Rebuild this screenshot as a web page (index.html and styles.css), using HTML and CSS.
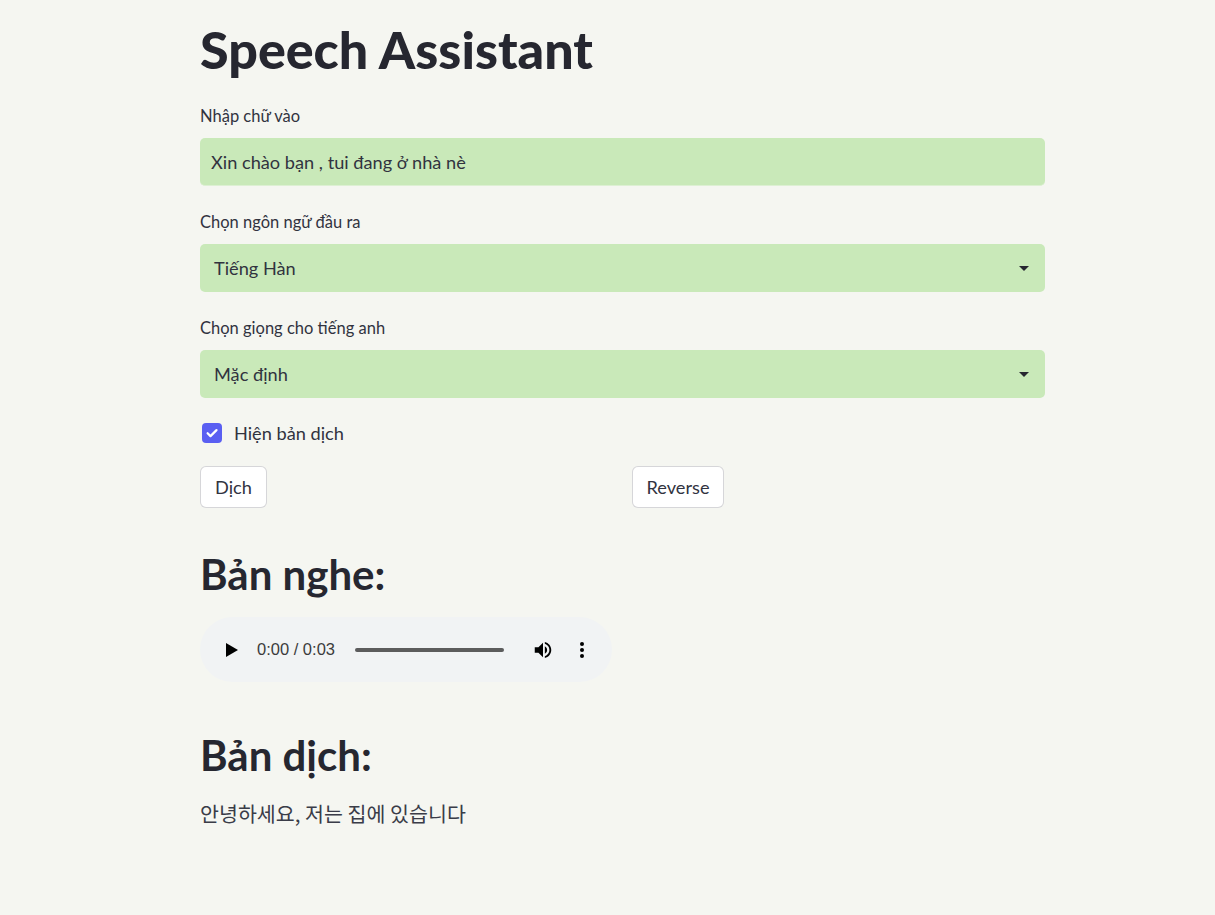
FILE: index.html
```html
<!DOCTYPE html>
<html lang="vi">
<head>
<meta charset="utf-8">
<title>Speech Assistant</title>
<link rel="stylesheet" href="styles.css">
</head>
<body>
<main class="app">
  <h1 class="title">Speech Assistant</h1>

  <div class="widget">
    <label class="label">Nhập chữ vào</label>
    <div class="field field-input">Xin chào bạn , tui đang ở nhà nè</div>
  </div>

  <div class="widget">
    <label class="label">Chọn ngôn ngữ đầu ra</label>
    <div class="field field-select">
      <span>Tiếng Hàn</span>
      <svg class="caret" width="10" height="5" viewBox="0 0 10 5"><path d="M0 0h10L5 5z" fill="#262730"/></svg>
    </div>
  </div>

  <div class="widget">
    <label class="label">Chọn giọng cho tiếng anh</label>
    <div class="field field-select">
      <span>Mặc định</span>
      <svg class="caret" width="10" height="5" viewBox="0 0 10 5"><path d="M0 0h10L5 5z" fill="#262730"/></svg>
    </div>
  </div>

  <div class="checkbox-row">
    <span class="checkbox">
      <svg width="14" height="14" viewBox="0 0 14 14"><path d="M2.6 7.2l2.9 2.9 6-6" fill="none" stroke="#fff" stroke-width="2.2" stroke-linecap="round" stroke-linejoin="round"/></svg>
    </span>
    <span class="checkbox-label">Hiện bản dịch</span>
  </div>

  <div class="columns">
    <div><button class="btn">Dịch</button></div>
    <div><button class="btn">Reverse</button></div>
  </div>

  <h2 class="subtitle subtitle-first">Bản nghe:</h2>

  <div class="audio">
    <svg class="play" width="12" height="14" viewBox="0 0 12 14"><path d="M0 0L12 7 0 14z" fill="#000"/></svg>
    <span class="time">0:00 / 0:03</span>
    <span class="track"></span>
    <svg class="vol" width="22" height="22" viewBox="0 0 24 24"><path d="M3 9v6h4l5 5V4L7 9H3zm13.5 3c0-1.77-1.020-3.29-2.5-4.03v8.05c1.48-.73 2.5-2.25 2.5-4.02zM14 3.23v2.06c2.89.86 5 3.54 5 6.71s-2.11 5.85-5 6.71v2.06c4.010-.91 7-4.49 7-8.77s-2.99-7.86-7-8.77z" fill="#000"/></svg>
    <svg class="more" width="4" height="16" viewBox="0 0 4 16"><circle cx="2" cy="2" r="2"/><circle cx="2" cy="8" r="2"/><circle cx="2" cy="14" r="2"/></svg>
  </div>

  <h2 class="subtitle">Bản dịch:</h2>
  <p class="result">안녕하세요, 저는 집에 있습니다</p>
</main>
</body>
</html>
```

FILE: styles.css
```css
html, body {
  margin: 0;
  padding: 0;
  background: #f5f6f1;
}
body {
  font-family: "Lato", "Noto Sans", "Noto Sans CJK KR", sans-serif;
  color: #262730;
}
.app {
  width: 845px;
  margin-left: 200px;
  padding-top: 17px;
  display: flex;
  flex-direction: column;
}
.title {
  margin: 0;
  font-size: 52px;
  font-weight: 900;
  line-height: 64px;
  letter-spacing: 0;
}
.widget {
  display: flex;
  flex-direction: column;
  margin-top: 24px;
}
.widget:first-of-type {
  margin-top: 23px;
}
.label {
  font-size: 16.5px;
  line-height: 24px;
  margin-bottom: 10px;
  color: #31333f;
}
.field {
  height: 48px;
  box-sizing: border-box;
  background: #c9e9b9;
  border-radius: 5px;
  font-size: 18.2px;
  color: #31333f;
  display: flex;
  align-items: center;
}
.field-input {
  padding: 0 11px;
  border-bottom: 1px solid #ddf0d3;
}
.field-select {
  padding: 0 16px 0 14px;
  justify-content: space-between;
}
.caret {
  display: block;
}
.checkbox-row {
  display: flex;
  align-items: center;
  margin-top: 24px;
  height: 22px;
}
.checkbox {
  width: 20px;
  height: 20px;
  margin-left: 2px;
  border-radius: 4px;
  background: #5a5ff2;
  display: flex;
  align-items: center;
  justify-content: center;
}
.checkbox-label {
  margin-left: 12px;
  font-size: 18.2px;
  color: #31333f;
}
.columns {
  display: grid;
  grid-template-columns: 1fr 1fr;
  column-gap: 18px;
  margin-top: 22px;
}
.btn {
  height: 42px;
  padding: 0 14px;
  background: #fff;
  border: 1px solid rgba(49, 51, 63, 0.2);
  border-radius: 6px;
  font-family: inherit;
  font-size: 18.2px;
  color: #31333f;
}
.subtitle {
  margin: 0;
  font-size: 42px;
  font-weight: 700;
  line-height: 52px;
}
.subtitle-first {
  margin-top: 40px;
}
.audio {
  margin-top: 17px;
  width: 412px;
  height: 65px;
  border-radius: 33px;
  background: #f1f3f4;
  display: flex;
  align-items: center;
  box-sizing: border-box;
  padding-left: 26px;
}
.play {
  display: block;
}
.time {
  margin-left: 19px;
  font-family: "Liberation Sans", Arial, sans-serif;
  font-size: 16.5px;
  color: #3c3c3c;
}
.track {
  margin-left: 20px;
  width: 149px;
  height: 4px;
  border-radius: 2px;
  background: #5c5c5c;
}
.vol {
  margin-left: 28px;
  display: block;
}
.more {
  margin-left: 26px;
  display: block;
}
.audio + .subtitle {
  margin-top: 47px;
}
.result {
  margin: 17px 0 0;
  font-family: "Noto Sans CJK KR", sans-serif;
  font-size: 20.6px;
  line-height: 30px;
  color: #3a3c48;
}
```
